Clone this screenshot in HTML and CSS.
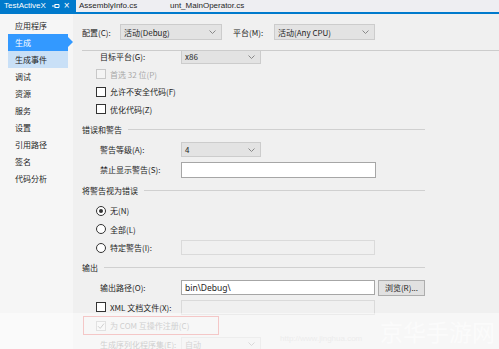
FILE: index.html
```html
<!DOCTYPE html>
<html lang="zh-CN">
<head>
  <meta charset="UTF-8" />
  <title>TestActiveX - 生成</title>
  <link rel="stylesheet" href="styles.css">
</head>
<body>
  <div class="tabs">
    <div class="tab active">
      <span class="tab-name">TestActiveX</span>
      <svg class="pin" width="8" height="6" viewBox="0 0 8 6"><path d="M0 3h3M3 1v4M3 1.5h4v3H3" fill="none" stroke="#fff" stroke-width="1"/></svg>
      <span class="close">×</span>
    </div>
    <div class="tab second">AssemblyInfo.cs</div>
    <div class="tab">unt_MainOperator.cs</div>
  </div>

  <div class="body">
    <div class="side">
      <div class="item">应用程序</div>
      <div class="item selected">生成</div>
      <div class="item hover">生成事件</div>
      <div class="item">调试</div>
      <div class="item">资源</div>
      <div class="item">服务</div>
      <div class="item">设置</div>
      <div class="item">引用路径</div>
      <div class="item">签名</div>
      <div class="item">代码分析</div>
    </div>

    <div class="page">
      <div class="config">
        <span class="cfg-label">配置(C):</span>
        <div class="select cfg-select">活动(Debug)<svg class="chev" width="7" height="4" viewBox="0 0 7 4"><path d="M0.5 0.5L3.5 3.5L6.5 0.5" fill="none" stroke="#888" stroke-width="1"/></svg></div>
        <span class="cfg-label plat">平台(M):</span>
        <div class="select plat-select">活动(Any CPU)<svg class="chev" width="7" height="4" viewBox="0 0 7 4"><path d="M0.5 0.5L3.5 3.5L6.5 0.5" fill="none" stroke="#888" stroke-width="1"/></svg></div>
      </div>

      <div class="scroll">
        <div class="inner">
          <div class="row sm">
            <span class="lbl">目标平台(G):</span>
            <div class="select small">x86<svg class="chev" width="7" height="4" viewBox="0 0 7 4"><path d="M0.5 0.5L3.5 3.5L6.5 0.5" fill="none" stroke="#888" stroke-width="1"/></svg></div>
          </div>
          <div class="row sm check disabled">
            <span class="box"></span>首选 32 位(P)
          </div>
          <div class="row sm check">
            <span class="box"></span>允许不安全代码(F)
          </div>
          <div class="row sm check">
            <span class="box"></span>优化代码(Z)
          </div>

          <div class="head first">错误和警告</div>
          <div class="row md">
            <span class="lbl">警告等级(A):</span>
            <div class="select small">4<svg class="chev" width="7" height="4" viewBox="0 0 7 4"><path d="M0.5 0.5L3.5 3.5L6.5 0.5" fill="none" stroke="#888" stroke-width="1"/></svg></div>
          </div>
          <div class="row lg">
            <span class="lbl">禁止显示警告(S):</span>
            <div class="input"></div>
          </div>

          <div class="head wide">将警告视为错误</div>
          <div class="row md check">
            <span class="radio on"></span>无(N)
          </div>
          <div class="row check">
            <span class="radio"></span>全部(L)
          </div>
          <div class="row md check">
            <span class="radio"></span><span class="radio-lbl">特定警告(I):</span>
            <div class="input off"></div>
          </div>

          <div class="head">输出</div>
          <div class="row lg">
            <span class="lbl">输出路径(O):</span>
            <div class="input path">bin\Debug\</div>
            <div class="btn">浏览(R)...</div>
          </div>
          <div class="row check">
            <span class="box"></span><span class="radio-lbl">XML 文档文件(X):</span>
            <div class="input off"></div>
          </div>
          <div class="row md check disabled com">
            <span class="box ticked"><svg width="8" height="8" viewBox="0 0 8 8"><path d="M1 4.2L3.2 6.4L7 1.6" fill="none" stroke="#aaa" stroke-width="1"/></svg></span>为 COM 互操作注册(C)
          </div>
          <div class="row">
            <span class="lbl disabled">生成序列化程序集(E):</span>
            <div class="select small off">自动<svg class="chev" width="7" height="4" viewBox="0 0 7 4"><path d="M0.5 0.5L3.5 3.5L6.5 0.5" fill="none" stroke="#bbb" stroke-width="1"/></svg></div>
          </div>
        </div>
      </div>
    </div>
  </div>

  <div class="veil">
    <span class="mark-url">http://www.jinghua.com</span>
    <span class="mark">京华手游网</span>
  </div>
</body>
</html>
```

FILE: styles.css
```css
body {
  margin: 0;
  width: 499px;
  height: 349px;
  overflow: hidden;
  position: relative;
  background: #f0f0f0;
  font-family: "Noto Sans CJK SC", "Noto Sans", sans-serif;
  font-size: 8px;
  color: #1e1e1e;
}

/* document tabs */
.tabs {
  display: flex;
  height: 12px;
  background: #eeeef2;
  border-bottom: 2px solid #007acc;
  font-family: "Liberation Sans", Arial, sans-serif;
  font-size: 8px;
  line-height: 12px;
}
.tab {
  padding-left: 3px;
  white-space: nowrap;
}
.tab.active {
  display: flex;
  align-items: center;
  width: 76px;
  box-sizing: border-box;
  padding-left: 4px;
  background: #007acc;
  color: #fff;
  overflow: hidden;
}
.tab-name {
  margin-right: 6px;
}
.pin {
  margin-right: 4px;
  flex-shrink: 0;
}
.close {
  font-size: 10px;
}
.tab.second {
  width: 91px;
  box-sizing: border-box;
}

.body {
  display: flex;
}

/* left page list */
.side {
  width: 73px;
  height: 335px;
  padding-top: 3px;
  box-sizing: border-box;
  background: #f6f6f6;
}
.item {
  position: relative;
  margin-left: 8px;
  width: 60px;
  height: 17px;
  line-height: 17px;
  padding-left: 7px;
  box-sizing: border-box;
}
.item.selected {
  background: #3399ff;
  color: #fff;
}
.item.selected::after {
  content: "";
  position: absolute;
  right: -5px;
  top: 3px;
  border-left: 5px solid #3399ff;
  border-top: 5px solid transparent;
  border-bottom: 5px solid transparent;
}
.item.hover {
  background: #c9e0f7;
}

/* property page */
.page {
  flex: 1;
}
.config {
  display: flex;
  align-items: center;
  height: 37px;
  box-sizing: border-box;
  margin-left: 9px;
  padding-top: 10px;
  padding-bottom: 10px;
  border-bottom: 1px solid #cccccc;
}
.cfg-label {
  width: 38px;
}
.cfg-label.plat {
  width: 41px;
  margin-left: 11px;
}
.select {
  display: flex;
  align-items: center;
  justify-content: space-between;
  height: 16px;
  box-sizing: border-box;
  padding: 0 5px 0 3px;
  border: 1px solid #cccccc;
  background: #e3e3e3;
  font-family: "Noto Sans CJK SC", "Noto Sans", sans-serif;
}
.cfg-select {
  width: 102px;
}
.plat-select {
  width: 101px;
}
.select.small {
  width: 80px;
  height: 15px;
}
.select.off {
  background: #eeeeee;
  border-color: #dedede;
  color: #b0b0b0;
}

.scroll {
  height: 298px;
  overflow: hidden;
}
.inner {
  margin-top: -3px;
}

.row {
  display: flex;
  align-items: center;
  height: 18px;
  padding-left: 27px;
}
.row.sm {
  height: 17.5px;
}
.row.md {
  height: 19px;
}
.row.lg {
  height: 21px;
}
.row.check {
  padding-left: 23px;
}
.lbl {
  width: 81px;
  flex-shrink: 0;
}
.radio-lbl {
  width: 71px;
}
.disabled {
  color: #a8a8a8;
}

.head {
  display: flex;
  align-items: center;
  gap: 6px;
  width: 343px;
  height: 20px;
  margin-left: 9px;
}
.head.first {
  height: 22px;
}
.head.wide {
  height: 21px;
}
.head::after {
  content: "";
  flex: 1;
  border-top: 1px solid #d0d0d0;
}

.box {
  width: 10px;
  height: 10px;
  box-sizing: border-box;
  margin-right: 4px;
  border: 1px solid #333;
  background: #fff;
  flex-shrink: 0;
  display: flex;
  align-items: center;
  justify-content: center;
}
.disabled .box {
  border-color: #c8c8c8;
  background: #f4f4f4;
}
.radio {
  width: 10px;
  height: 10px;
  box-sizing: border-box;
  margin-right: 4px;
  border: 1px solid #333;
  border-radius: 50%;
  background: #fff;
  flex-shrink: 0;
  display: flex;
  align-items: center;
  justify-content: center;
}
.radio.on::after {
  content: "";
  width: 4px;
  height: 4px;
  border-radius: 50%;
  background: #333;
}

.input {
  width: 195px;
  height: 16px;
  box-sizing: border-box;
  border: 1px solid #a6a6a6;
  background: #fff;
  padding-left: 3px;
  line-height: 14px;
}
.input.path {
  width: 194px;
  height: 15px;
  font-family: "Noto Sans", sans-serif;
  font-size: 8.5px;
}
.input.off {
  height: 15px;
  width: 194px;
  border-color: #dadada;
  background: #f0f0f0;
}
.btn {
  width: 47px;
  height: 16px;
  box-sizing: border-box;
  margin-left: 3px;
  border: 1px solid #adadad;
  background: #e1e1e1;
  text-align: center;
  line-height: 14px;
}

.row.com {
  width: 136px;
  box-sizing: border-box;
  margin-left: 10px;
  padding-left: 12px;
  border: 1.5px solid #ec9a9a;
}

/* watermark strip over the bottom */
.veil {
  position: absolute;
  left: 0;
  top: 313px;
  width: 499px;
  height: 36px;
  background: rgba(255, 255, 255, 0.45);
  overflow: hidden;
}
.mark {
  position: absolute;
  right: 4px;
  top: 7px;
  font-size: 23px;
  line-height: 1;
  color: rgba(255, 255, 255, 0.55);
}
.mark-url {
  position: absolute;
  left: 280px;
  top: 21px;
  font-family: "Liberation Sans", Arial, sans-serif;
  font-size: 8px;
  color: rgba(225, 225, 225, 0.5);
}
```
